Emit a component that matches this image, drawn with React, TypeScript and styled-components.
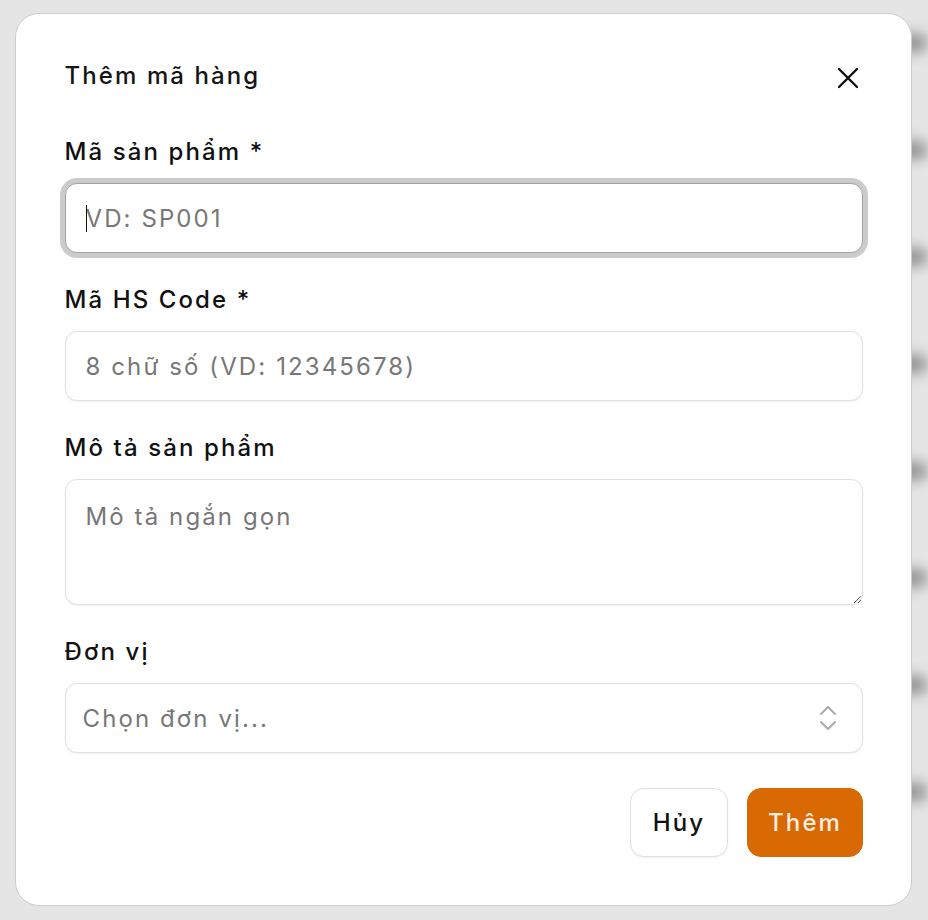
import React from "react";
import styled, { createGlobalStyle } from "styled-components";

const GlobalStyle = createGlobalStyle`
  html, body { margin: 0; padding: 0; }
  body {
    background: #e5e5e5;
    font-family: Inter, "Noto Sans", "Liberation Sans", sans-serif;
    -webkit-font-smoothing: antialiased;
  }
  * { box-sizing: border-box; }
`;

const Screen = styled.div`
  position: relative;
  width: 928px;
  height: 920px;
  overflow: hidden;
  background: #e5e5e5;
`;

const BackPage = styled.div`
  display: flex;
  flex-direction: column;
  gap: 89px;
  padding-top: 34px;
  filter: blur(7px);
`;

const BackRow = styled.div`
  display: flex;
  justify-content: flex-end;
  height: 18px;
`;

const BackBlob = styled.div`
  width: 40px;
  height: 18px;
  border-radius: 9px;
  background: #8f8f8f;
`;

const Overlay = styled.div`
  position: absolute;
  inset: 0;
  padding: 13px 16px 14px 15px;
  display: flex;
`;

const Modal = styled.div`
  flex: 1;
  display: flex;
  flex-direction: column;
  background: #ffffff;
  border: 1.5px solid #cdcdcd;
  border-radius: 24px;
  padding: 47px 48px 48px 48.5px;
  letter-spacing: 2.1px;
`;

const Header = styled.div`
  display: flex;
  align-items: center;
  justify-content: space-between;
  margin-bottom: 46px;
`;

const Title = styled.h2`
  margin: 0;
  font-size: 24px;
  line-height: 30px;
  font-weight: 500;
  color: #151515;
`;

const CloseButton = styled.button`
  display: flex;
  align-items: center;
  justify-content: center;
  width: 24px;
  height: 24px;
  margin-top: 4px;
  margin-right: 3px;
  padding: 0;
  border: 0;
  background: transparent;
  cursor: pointer;
`;

const Form = styled.div`
  display: flex;
  flex-direction: column;
  gap: 32px;
`;

const Field = styled.label`
  display: flex;
  flex-direction: column;
  gap: 16px;
`;

const LabelText = styled.span`
  font-size: 24px;
  line-height: 30px;
  font-weight: 500;
  color: #111111;
`;

const InputWrap = styled.div`
  position: relative;
  display: flex;
`;

const Caret = styled.span`
  position: absolute;
  left: 21px;
  top: 22px;
  width: 1.5px;
  height: 27px;
  background: #111;
  pointer-events: none;
`;

const TextInput = styled.input<{ $active?: boolean }>`
  height: 70px;
  width: 100%;
  padding: 0 20px;
  font-family: inherit;
  font-size: 24px;
  letter-spacing: inherit;
  color: #111;
  background: #fff;
  border: 1.5px solid ${(p) => (p.$active ? "#a3a3a3" : "#e0e0e0")};
  border-radius: 12px;
  outline: none;
  caret-color: transparent;
  box-shadow: ${(p) =>
    p.$active ? "0 0 0 5px #cbcbcb" : "0 1px 2px rgba(0,0,0,0.06)"};
  &::placeholder { color: #777777; }
`;

const TextArea = styled.textarea`
  height: 126px;
  width: 100%;
  padding: 22px 20px 18px;
  font-family: inherit;
  font-size: 24px;
  letter-spacing: inherit;
  line-height: 30px;
  color: #111;
  background: #fff;
  border: 1.5px solid #e0e0e0;
  border-radius: 12px;
  outline: none;
  resize: vertical;
  box-shadow: 0 1px 2px rgba(0,0,0,0.06);
  &::placeholder { color: #777777; }
`;

const SelectBox = styled.button`
  height: 70px;
  width: 100%;
  display: flex;
  align-items: center;
  justify-content: space-between;
  padding: 0 24px 0 17px;
  font-family: inherit;
  font-size: 24px;
  letter-spacing: inherit;
  color: #777777;
  background: #fff;
  border: 1.5px solid #e0e0e0;
  border-radius: 12px;
  box-shadow: 0 1px 2px rgba(0,0,0,0.06);
  cursor: pointer;
  text-align: left;
`;

const Footer = styled.div`
  display: flex;
  justify-content: flex-end;
  gap: 19px;
  margin-top: 35px;
`;

const Button = styled.button<{ $primary?: boolean }>`
  height: 69px;
  padding: 0 ${(p) => (p.$primary ? "20px" : "22px")};
  font-family: inherit;
  font-size: 24px;
  letter-spacing: inherit;
  font-weight: 500;
  border-radius: 14px;
  cursor: pointer;
  color: ${(p) => (p.$primary ? "#fdeee2" : "#111")};
  background: ${(p) => (p.$primary ? "#d96903" : "#fff")};
  border: 1.5px solid ${(p) => (p.$primary ? "#d96903" : "#e0e0e0")};
  box-shadow: ${(p) => (p.$primary ? "none" : "0 1px 2px rgba(0,0,0,0.06)")};
`;

const CloseIcon = () => (
  <svg width="22" height="22" viewBox="0 0 22 22" fill="none">
    <path d="M2 2 L20 20 M20 2 L2 20" stroke="#111" strokeWidth="2.4" strokeLinecap="round" />
  </svg>
);

const UpDownIcon = () => (
  <svg width="20" height="28" viewBox="0 0 20 28" fill="none">
    <path
      d="M3 10 L10 3 L17 10 M3 18 L10 25 L17 18"
      stroke="#ababab"
      strokeWidth="2"
      strokeLinecap="round"
      strokeLinejoin="round"
    />
  </svg>
);

export default function App() {
  const blobs = Array.from({ length: 8 });
  return (
    <>
      <GlobalStyle />
      <Screen>
        <BackPage>
          {blobs.map((_, i) => (
            <BackRow key={i}>
              <BackBlob />
            </BackRow>
          ))}
        </BackPage>
        <Overlay>
          <Modal>
            <Header>
              <Title>Thêm mã hàng</Title>
              <CloseButton aria-label="Đóng">
                <CloseIcon />
              </CloseButton>
            </Header>
            <Form>
              <Field>
                <LabelText>Mã sản phẩm *</LabelText>
                <InputWrap>
                  <TextInput $active autoFocus placeholder="VD: SP001" />
                  <Caret />
                </InputWrap>
              </Field>
              <Field>
                <LabelText>Mã HS Code *</LabelText>
                <TextInput placeholder="8 chữ số (VD: 12345678)" />
              </Field>
              <Field>
                <LabelText>Mô tả sản phẩm</LabelText>
                <TextArea placeholder="Mô tả ngắn gọn" />
              </Field>
              <Field as="div">
                <LabelText>Đơn vị</LabelText>
                <SelectBox type="button">
                  <span>Chọn đơn vị...</span>
                  <UpDownIcon />
                </SelectBox>
              </Field>
            </Form>
            <Footer>
              <Button>Hủy</Button>
              <Button $primary>Thêm</Button>
            </Footer>
          </Modal>
        </Overlay>
      </Screen>
    </>
  );
}
